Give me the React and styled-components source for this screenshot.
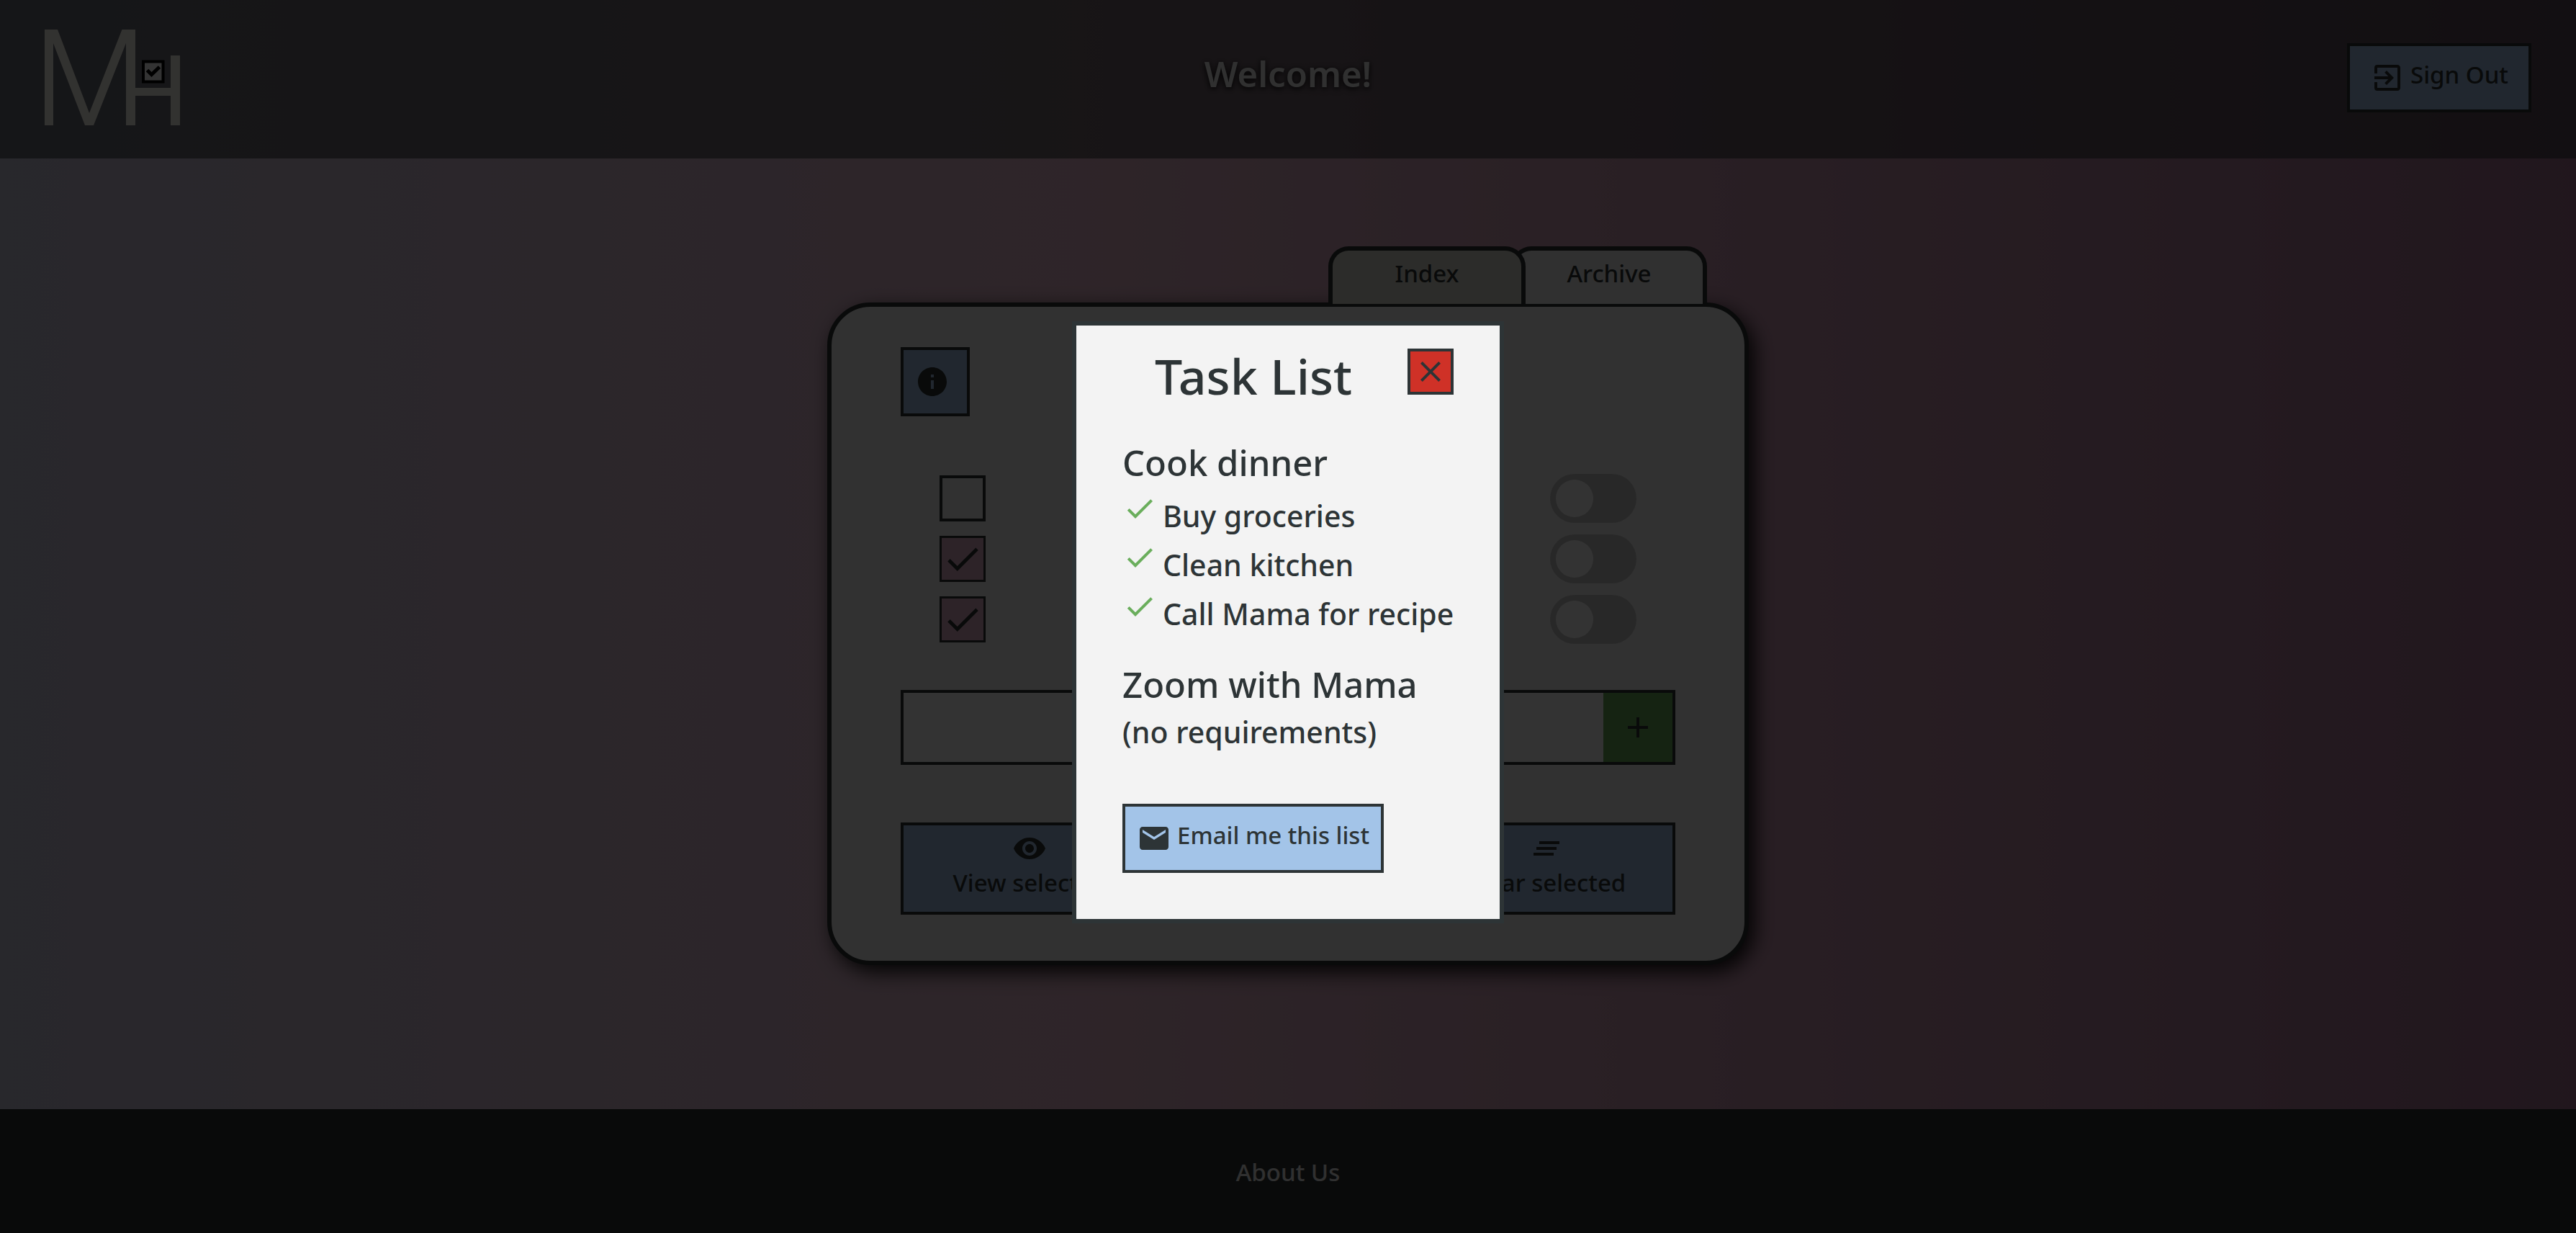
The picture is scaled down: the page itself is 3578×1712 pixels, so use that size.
import React from "react";
import styled, { createGlobalStyle, ThemeProvider } from "styled-components";
import {
  MdExitToApp,
  MdInfo,
  MdCheck,
  MdAdd,
  MdVisibility,
  MdClearAll,
  MdClose,
  MdEmail,
} from "react-icons/md";

const theme = {
  ink: "#2d3436",
  paper: "#f3f3f3",
  cream: "#dddcd0",
  blue: "#a3c4e8",
  green: "#6aae5c",
  red: "#cf3127",
  pink: "#e1afc6",
  track: "#c8c8c8",
};

const GlobalStyle = createGlobalStyle`
  *, *::before, *::after { box-sizing: border-box; }
  body {
    margin: 0;
    font-family: "Noto Sans", "Open Sans", sans-serif;
    font-size: 33px;
    font-weight: 500;
    line-height: 48px;
    color: #2d3436;
  }
  h1, h2, h3, p, ul { margin: 0; padding: 0; font-weight: inherit; }
  button, input { margin: 0; font: inherit; color: inherit; }
  button { cursor: pointer; }
  svg { display: block; flex: none; }
`;

const Page = styled.div`
  min-height: 100vh;
  display: flex;
  flex-direction: column;
  background: linear-gradient(to right, #c8c5dc, #e5b6ca 42%, #a57192);
`;

const Header = styled.header`
  height: 220px;
  padding: 0 62px 4px;
  display: grid;
  grid-template-columns: 1fr auto 1fr;
  align-items: center;
  background: rgba(45, 52, 54, 0.6);
`;

const HomeLink = styled.a`
  justify-self: start;
`;

const Greeting = styled.h1`
  font-size: 49px;
  font-weight: 600;
  line-height: 64px;
  padding-bottom: 12px;
  color: #f0f0f0;
  text-shadow: 0 2px 8px #000;
`;

const Button = styled.button`
  display: flex;
  flex-direction: ${(p) => (p.$stacked ? "column" : "row")};
  align-items: center;
  justify-self: ${(p) => p.$align || "stretch"};
  gap: ${(p) => (p.$stacked ? "0" : "8px")};
  width: ${(p) => (p.$square ? "96px" : "auto")};
  height: ${(p) => (p.$stacked ? "128px" : "96px")};
  padding: ${(p) => (p.$stacked ? "8px 16px" : `0 ${p.$pad || 16}px`)};
  border: 4px solid ${(p) => p.theme.ink};
  background: ${(p) => p.theme.blue};
`;

const ButtonText = styled.span`
  padding-bottom: 8px;
  white-space: nowrap;
`;

const Main = styled.main`
  flex: 1;
  display: flex;
  align-items: center;
  justify-content: center;
`;

const Binder = styled.div`
  width: 1280px;
  max-width: 100%;
`;

const Tabs = styled.nav`
  display: flex;
  justify-content: flex-end;
  margin-top: -78px;
  margin-bottom: -2px;
  padding-right: 58px;
`;

const Tab = styled.a`
  position: relative;
  z-index: ${(p) => (p.$front ? 2 : 1)};
  width: ${(p) => (p.$front ? "274px" : "272px")};
  height: 80px;
  margin-left: ${(p) => (p.$front ? "0" : "-20px")};
  padding-top: 8px;
  border: 6px solid ${(p) => p.theme.ink};
  border-bottom: 0;
  border-radius: 28px 28px 0 0;
  background: ${(p) => (p.$front ? p.theme.cream : "#ededed")};
  color: inherit;
  text-align: center;
  text-decoration: none;
`;

const Card = styled.section`
  padding: 56px 96px 64px;
  border: 6px solid ${(p) => p.theme.ink};
  border-radius: 60px;
  background: ${(p) => p.theme.paper};
  box-shadow: 8px 10px 28px rgba(0, 0, 0, 0.9);
`;

const TaskRows = styled.ul`
  list-style: none;
  display: grid;
  gap: 16px;
  margin: 80px 0 64px;
`;

const TaskRow = styled.li`
  display: flex;
  align-items: center;
  justify-content: space-between;
  height: 68px;
  padding: 0 54px;
`;

const Tick = styled.span`
  display: grid;
  place-items: center;

  > * { grid-area: 1 / 1; }
  svg { pointer-events: none; }
`;

const TickInput = styled.input`
  appearance: none;
  width: 64px;
  height: 64px;
  border: 4px solid ${(p) => p.theme.ink};

  &:checked {
    border-width: 3px;
    background: ${(p) => p.theme.pink};
  }
`;

const Toggle = styled.input`
  appearance: none;
  display: flex;
  align-items: center;
  width: 120px;
  height: 68px;
  padding: 0 8px;
  border-radius: 34px;
  background: ${(p) => p.theme.track};

  &::before {
    content: "";
    width: 52px;
    height: 52px;
    border-radius: 50%;
    background: #fff;
  }

  &:checked { justify-content: flex-end; }
`;

const AddForm = styled.form`
  display: flex;
  height: 104px;
  margin-bottom: 80px;
  border: 4px solid ${(p) => p.theme.ink};
  background: #fff;
`;

const AddInput = styled.input`
  flex: 1;
  min-width: 0;
  padding: 0 24px;
  border: 0;
  background: none;
`;

const AddButton = styled.button`
  display: grid;
  place-items: center;
  width: 96px;
  padding: 0;
  border: 0;
  background: ${(p) => p.theme.green};
`;

const Actions = styled.div`
  display: grid;
  grid-template-columns: repeat(3, 1fr);

  > :last-child { grid-column: 3; }
`;

const Footer = styled.footer`
  display: grid;
  place-items: center;
  height: 172px;
  background: ${(p) => p.theme.ink};
`;

const FooterLink = styled.a`
  padding-top: 4px;
  color: #f0f0f0;
  text-decoration: none;
`;

const Overlay = styled.div`
  position: fixed;
  inset: 0;
  z-index: 10;
  display: flex;
  align-items: center;
  justify-content: center;
  padding-top: 16px;
  background: rgba(0, 0, 0, 0.8);
`;

const Modal = styled.div`
  width: 600px;
  padding: 32px 64px 64px;
  border: 6px solid ${(p) => p.theme.ink};
  background: ${(p) => p.theme.paper};
`;

const ModalHead = styled.div`
  display: flex;
  align-items: flex-start;
  gap: 32px;
  margin-bottom: 50px;
`;

const ModalTitle = styled.h2`
  flex: 1;
  font-size: 68px;
  line-height: 76px;
  text-align: center;
`;

const CloseButton = styled.button`
  display: grid;
  place-items: center;
  width: 64px;
  height: 64px;
  padding: 0;
  border: 4px solid ${(p) => p.theme.ink};
  background: ${(p) => p.theme.red};
`;

const Task = styled.section`
  margin-bottom: 32px;
  font-size: 41px;
  line-height: 68px;
`;

const TaskName = styled.h3`
  margin-bottom: ${(p) => (p.$spaced ? "8px" : "0")};
  font-size: 49px;
  line-height: 64px;
`;

const Steps = styled.ul`
  list-style: none;
`;

const Step = styled.li`
  display: flex;
  align-items: flex-start;
  gap: 8px;
  white-space: nowrap;

  svg { color: ${(p) => p.theme.green}; }
`;

const ModalFoot = styled.div`
  display: flex;
  padding-top: 34px;
`;

const Logo = () => (
  <svg width="190" height="134" viewBox="0 0 190 134" aria-hidden="true">
    <g transform="translate(-62 -41)">
      <path
        d="M62 41H80l44 116L169.500 41H188v133h-13V60l-45 114h-12L74 60v114H62z"
        fill="#faf9ee"
      />
      <path d="M188 122h49V77h13v97h-13v-41h-49z" fill="#faf9ee" />
      <path d="M199 85.500h27.500v28H199z" fill="#fff" stroke="#000" strokeWidth="4" />
      <path d="M204.500 97.500l6 6 11-10.500" fill="none" stroke="#000" strokeWidth="5" />
    </g>
  </svg>
);

const rows = [
  { id: 1, checked: false },
  { id: 2, checked: true },
  { id: 3, checked: true },
];

const steps = ["Buy groceries", "Clean kitchen", "Call Mama for recipe"];

export default function App() {
  return (
    <ThemeProvider theme={theme}>
      <GlobalStyle />
      <Page>
        <Header>
          <HomeLink href="#home" aria-label="Home">
            <Logo />
          </HomeLink>
          <Greeting>Welcome!</Greeting>
          <Button type="button" $align="end" $pad={28}>
            <MdExitToApp size={48} />
            <ButtonText>Sign Out</ButtonText>
          </Button>
        </Header>

        <Main>
          <Binder>
            <Tabs>
              <Tab href="#index" $front>Index</Tab>
              <Tab href="#archive">Archive</Tab>
            </Tabs>
            <Card>
              <Button type="button" $square aria-label="Info">
                <MdInfo size={48} />
              </Button>
              <TaskRows>
                {rows.map((row) => (
                  <TaskRow key={row.id}>
                    <Tick>
                      <TickInput
                        type="checkbox"
                        defaultChecked={row.checked}
                        aria-label={`Select task ${row.id}`}
                      />
                      {row.checked && <MdCheck size={58} />}
                    </Tick>
                    <Toggle type="checkbox" role="switch" aria-label={`Complete task ${row.id}`} />
                  </TaskRow>
                ))}
              </TaskRows>
              <AddForm>
                <AddInput type="text" aria-label="New task" />
                <AddButton type="button" aria-label="Add task">
                  <MdAdd size={48} />
                </AddButton>
              </AddForm>
              <Actions>
                <Button type="button" $stacked>
                  <MdVisibility size={48} />
                  <ButtonText>View selected</ButtonText>
                </Button>
                <Button type="button" $stacked>
                  <MdClearAll size={48} />
                  <ButtonText>Clear selected</ButtonText>
                </Button>
              </Actions>
            </Card>
          </Binder>
        </Main>

        <Footer>
          <FooterLink href="#about">About Us</FooterLink>
        </Footer>
      </Page>

      <Overlay>
        <Modal role="dialog" aria-modal="true" aria-labelledby="list-title">
          <ModalHead>
            <ModalTitle id="list-title">Task List</ModalTitle>
            <CloseButton type="button" aria-label="Close">
              <MdClose size={48} />
            </CloseButton>
          </ModalHead>
          <Task>
            <TaskName $spaced>Cook dinner</TaskName>
            <Steps>
              {steps.map((step) => (
                <Step key={step}>
                  <MdCheck size={48} />
                  {step}
                </Step>
              ))}
            </Steps>
          </Task>
          <Task>
            <TaskName>Zoom with Mama</TaskName>
            <p>(no requirements)</p>
          </Task>
          <ModalFoot>
            <Button type="button">
              <MdEmail size={48} />
              <ButtonText>Email me this list</ButtonText>
            </Button>
          </ModalFoot>
        </Modal>
      </Overlay>
    </ThemeProvider>
  );
}
